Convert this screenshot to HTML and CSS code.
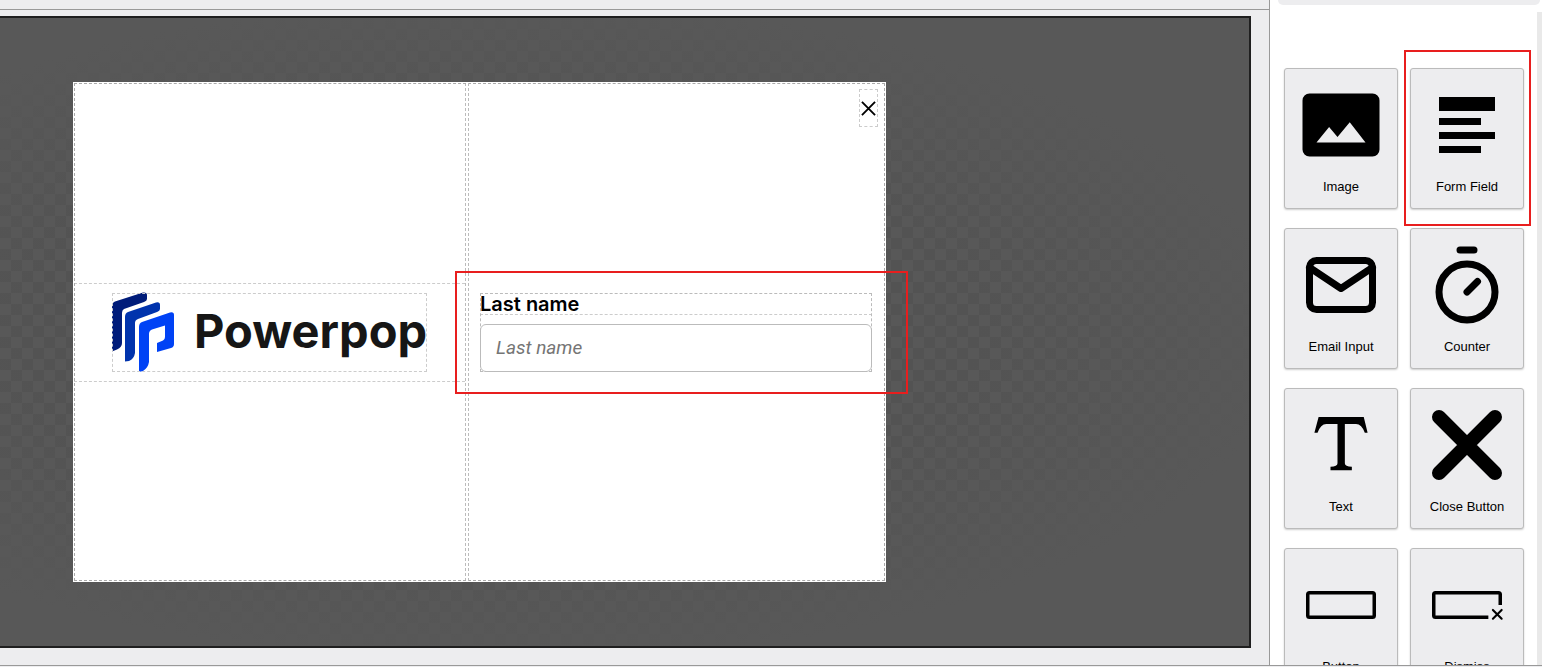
FILE: index.html
```
<!DOCTYPE html>
<html lang="en">
<head>
    <meta charset="UTF-8">
    <meta name="viewport" content="width=device-width, initial-scale=1.0">
    <title>Popup Editor</title>
    <link rel="stylesheet" href="styles.css">
</head>
<body>

    <div class="app">

        <!-- Editor -->
        <main class="editor">
            <div class="toolbar"></div>
            <div class="canvas">
                <div class="popup">
                    <div class="column column-left">
                        <div class="logo-row">
                            <div class="logo">
                                <svg class="logo-mark" viewBox="0 0 62 80" aria-hidden="true">
                                    <path fill="#001c7a" d="M0 14Q0 11 3 9.500L31 .5Q35 0 35 3V7Q35 9 32 10L12 17Q10 18 10 21V51Q10 55 5 57.500L0 59.500Z"/>
                                    <path fill="#0033ad" d="M13 25Q13 21 16 20L44 10.500Q48 9.500 48 13V17Q48 19 45 20L26 27Q23 28 23 31V61Q22 67 17 69L13 69.500Z"/>
                                    <path fill="#0042f5" d="M27 35Q27 31 30 30L58 20.500Q62 19.500 62 23V52Q62 55 59 56L45 60V51L51 48.500Q53 47.500 53 45V33.500L40 37.500Q37 38.500 37 42V70Q36 76 31 79L27 80Z"/>
                                </svg>
                                <span class="logo-text">Powerpop</span>
                            </div>
                        </div>
                    </div>
                    <div class="column column-right">
                        <button class="popup-close" aria-label="Close">
                            <svg viewBox="0 0 16 16"><path d="M1 1L15 15M15 1L1 15"/></svg>
                        </button>
                        <div class="field">
                            <label for="last-name">Last name</label>
                            <input type="text" id="last-name" placeholder="Last name">
                            <div class="highlight highlight-field"></div>
                        </div>
                    </div>
                </div>
            </div>
        </main>

        <!-- Blocks Panel -->
        <aside class="panel">
            <div class="panel-tabs"></div>
            <div class="panel-scrollbar"></div>
            <div class="blocks">
                <button class="block">
                    <svg viewBox="0 0 24 24"><path fill-rule="evenodd" d="M3 3H21A2 2 0 0 1 23 5V19A2 2 0 0 1 21 21H3A2 2 0 0 1 1 19V5A2 2 0 0 1 3 3ZM5 17H19L14.500 11.200L11 15.400L8.600 12.600Z"/></svg>
                    <span>Image</span>
                </button>
                <button class="block">
                    <svg viewBox="0 0 24 24"><path d="M4 4H20V8H4ZM4 10H16V12H4ZM4 14H20V16H4ZM4 18H16V20H4Z"/></svg>
                    <span>Form Field</span>
                    <span class="highlight highlight-block"></span>
                </button>
                <button class="block">
                    <svg class="line" viewBox="0 0 24 24"><rect x="3" y="5" width="18" height="14" rx="2"/><path d="M3 7L12 13L21 7"/></svg>
                    <span>Email Input</span>
                </button>
                <button class="block">
                    <svg class="line" viewBox="0 0 24 24"><path d="M10 2H14M12 14L15 11"/><circle cx="12" cy="14" r="8"/></svg>
                    <span>Counter</span>
                </button>
                <button class="block">
                    <svg viewBox="0 0 24 24"><path d="M5.600 4H18.500L19.600 8.500H18.800Q17.900 6 16.300 6H13.100V17.200Q13.100 18.100 15.100 18.200V19.200H9V18.200Q11 18.100 11 17.200V6H7.800Q6.200 6 5.300 8.500H4.400Z"/></svg>
                    <span>Text</span>
                </button>
                <button class="block">
                    <svg class="line bold" viewBox="0 0 24 24"><path d="M4 4L20 20M20 4L4 20"/></svg>
                    <span>Close Button</span>
                </button>
                <button class="block">
                    <svg class="line thin" viewBox="0 0 24 24"><rect x="2.500" y="8.500" width="19" height="7" rx=".5"/></svg>
                    <span>Button</span>
                </button>
                <button class="block">
                    <svg class="line thin" viewBox="0 0 24 24"><path stroke-linecap="butt" d="M21.500 12V9Q21.500 8.500 21 8.500H3Q2.500 8.500 2.500 9V15Q2.500 15.500 3 15.500H18.100"/><path stroke-width=".6" d="M19.400 13.400L21.900 15.900M21.900 13.400L19.400 15.900"/></svg>
                    <span>Dismiss</span>
                </button>
            </div>
        </aside>

    </div>

</body>
</html>
```
FILE: styles.css
```
/* Global Styles */
* {
    box-sizing: border-box;
}

body {
    font-family: "Liberation Sans", Arial, sans-serif;
    margin: 0;
    background-color: #ededef;
    color: #000;
}

button {
    font-family: inherit;
    cursor: pointer;
}

.app {
    display: flex;
    height: calc(100vh - 1px);
    border-bottom: 1px solid #999;
    overflow: hidden;
}

/* Editor */
.editor {
    flex: 1;
    display: flex;
    flex-direction: column;
    border-right: 1px solid #999;
}

.toolbar {
    height: 10px;
    border-bottom: 1px solid #999;
}

.canvas {
    flex: 1;
    display: flex;
    align-items: flex-start;
    margin: 6px 18px 17px 0;
    padding: 64px 73px;
    border: 2px solid #1f1f1f;
    border-left: none;
    background:
        radial-gradient(ellipse at 40% 50%, rgba(88, 88, 88, 0) 45%, #585858 75%),
        repeating-conic-gradient(#535353 0% 25%, #585858 0% 50%) 0 0 / 22px 22px;
}

/* Popup */
.popup {
    display: flex;
    gap: 2px;
    width: 813px;
    height: 500px;
    padding: 1px;
    background-color: white;
    outline: 1px dashed #aaa;
    outline-offset: -2px;
}

.column {
    display: flex;
    flex-direction: column;
    justify-content: center;
}

.column-left {
    width: 392px;
    border-right: 1px dashed #bbb;
}

.column-right {
    position: relative;
    flex: 1;
    padding: 0 13px 0 11px;
    border-left: 1px dashed #bbb;
}

.logo-row {
    padding: 9px 38px;
    border: 1px dashed #ccc;
    border-left: none;
    border-right: none;
}

.logo {
    display: flex;
    align-items: center;
    height: 79px;
    outline: 1px dashed #ccc;
    outline-offset: -1px;
}

.logo-mark {
    flex-shrink: 0;
    width: 62px;
    height: 80px;
}

.logo-text {
    margin-left: 20px;
    font-family: Inter, sans-serif;
    font-size: 47px;
    font-weight: 700;
    line-height: 76px;
    padding-bottom: 3px;
    color: #161616;
}

.popup-close {
    position: absolute;
    top: 6px;
    right: 7px;
    width: 19px;
    height: 38px;
    padding: 0 1px;
    border: 1px dashed #ccc;
    background: none;
}

.popup-close svg {
    display: block;
    width: 15px;
    fill: none;
    stroke: #000;
    stroke-width: 2;
}

/* Form Field */
.field {
    position: relative;
    display: flex;
    flex-direction: column;
    gap: 9px;
    font-family: Inter, sans-serif;
    outline: 1px dashed #bbb;
    outline-offset: -1px;
}

.field label {
    height: 22px;
    line-height: 22px;
    font-size: 20px;
    font-weight: 600;
    border-bottom: 1px dashed #ccc;
}

.field input {
    height: 48px;
    padding: 0 15px;
    border: 1px solid #bbb;
    border-radius: 6px;
    background: none;
    font-family: Roboto, sans-serif;
    font-size: 19px;
}

.field input::placeholder {
    color: #757575;
    font-style: italic;
}

/* Red Highlights */
.highlight {
    position: absolute;
    border: 2px solid #e81e1e;
    pointer-events: none;
}

.highlight-field {
    inset: -22px -36px -22px -25px;
}

.highlight-block {
    inset: -19px -8px -18px -7px;
}

/* Blocks Panel */
.panel {
    position: relative;
    width: 272px;
    background-color: white;
}

.panel-tabs {
    height: 5px;
    margin: 0 2px 0 8px;
    border-radius: 0 0 8px 8px;
    background-color: #ededef;
}

.panel-scrollbar {
    position: absolute;
    top: 12px;
    right: 0;
    bottom: 0;
    width: 5px;
    background-color: #e9e9e9;
}

.blocks {
    display: grid;
    grid-template-columns: 1fr 1fr;
    gap: 19px 12px;
    padding: 63px 18px 0 14px;
}

.block {
    position: relative;
    display: flex;
    flex-direction: column;
    align-items: center;
    height: 141px;
    padding: 14px 0 0;
    border: 1px solid #bbb;
    border-radius: 3px;
    background-color: #ededef;
    box-shadow: 0 1px 2px rgba(0, 0, 0, 0.2);
    font-size: 13px;
    line-height: 16px;
    color: #000;
}

.block svg {
    width: 84px;
    height: 84px;
    margin-bottom: 12px;
}

.line {
    fill: none;
    stroke: #000;
    stroke-width: 2;
    stroke-linecap: round;
    stroke-linejoin: round;
}

.bold {
    stroke-width: 4;
}

.thin {
    stroke-width: 1;
}
```
